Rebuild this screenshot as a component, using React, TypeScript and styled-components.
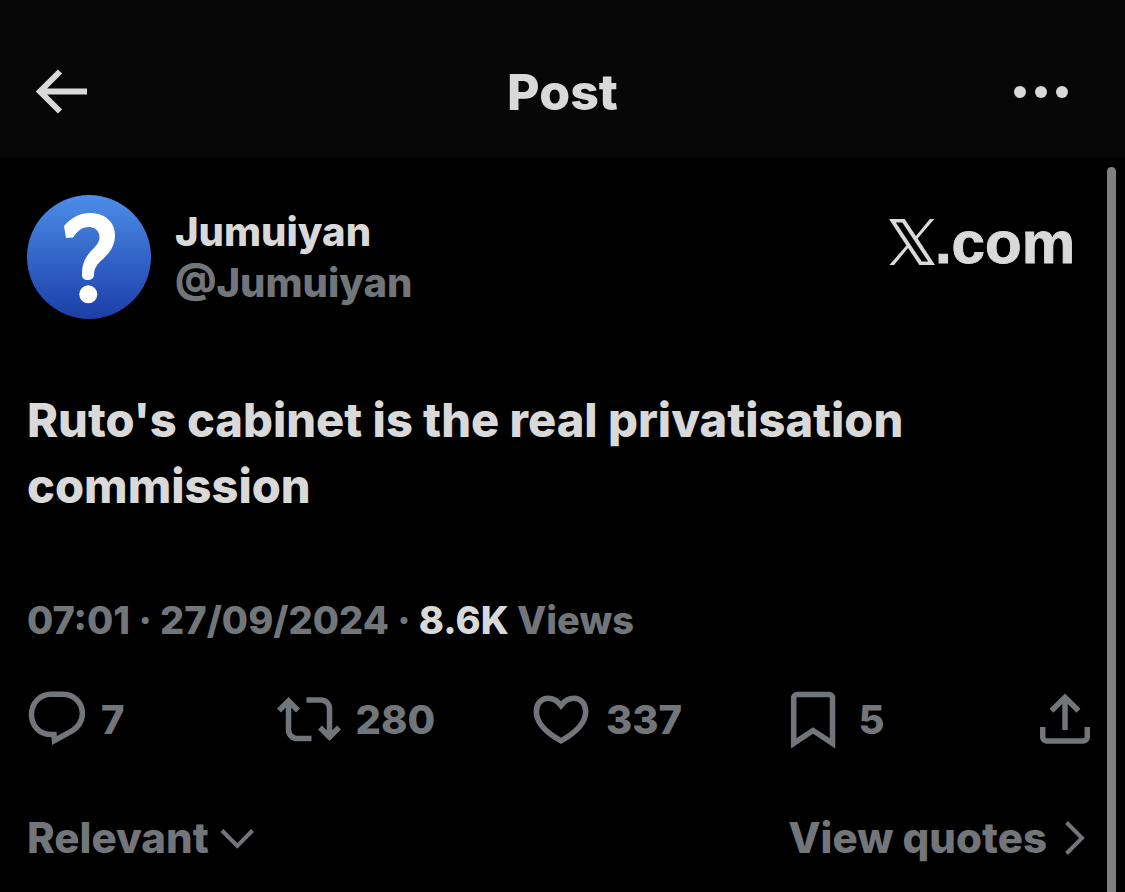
import React from "react";
import styled, { createGlobalStyle } from "styled-components";

const GlobalStyle = createGlobalStyle`
  *, *::before, *::after { box-sizing: border-box; }
  body {
    margin: 0;
    background: #000;
    color: #d9d9d9;
    font-family: Inter, "Liberation Sans", sans-serif;
    font-weight: 800;
  }
  h1, h2, p { margin: 0; font-weight: inherit; }
`;

const Page = styled.div`
  min-height: 100vh;
  display: flex;
  flex-direction: column;
`;

const Header = styled.header`
  display: grid;
  grid-template-columns: 1fr auto 1fr;
  align-items: center;
  height: 158px;
  padding: 26px 52px 0 32px;
  background: #070707;
`;

const Title = styled.h1`
  font-size: 50px;
  line-height: 64px;
  padding-left: 20px;
`;

const PlainButton = styled.button`
  display: inline-flex;
  align-items: center;
  padding: 0;
  border: 0;
  background: none;
  color: inherit;
  font: inherit;
  cursor: pointer;
`;

const MenuButton = styled(PlainButton)`
  justify-self: end;
`;

const Content = styled.main`
  position: relative;
  flex: 1;
  padding: 37px 35px 24px 27px;
`;

const ScrollThumb = styled.div`
  position: absolute;
  top: 9px;
  right: 9px;
  bottom: 0;
  width: 9px;
  border-radius: 5px 5px 0 0;
  background: #808080;
`;

const Author = styled.div`
  display: flex;
  align-items: center;
  gap: 24px;
  height: 124px;
`;

const Names = styled.div`
  flex: 1;
`;

const Name = styled.p<{ $muted?: boolean }>`
  font-size: 40px;
  line-height: 51px;
  color: ${(p) => (p.$muted ? "#72767a" : "inherit")};
`;

const Brand = styled.a`
  display: flex;
  align-items: flex-end;
  margin: 0 15px 28px 0;
  color: inherit;
  text-decoration: none;
  font-family: "Liberation Sans", Arial, sans-serif;
  font-weight: 700;
  font-size: 60px;
  line-height: 64px;
  -webkit-text-stroke: 1px currentColor;
`;

const PostText = styled.h2`
  margin-top: 68px;
  max-width: 940px;
  font-size: 47px;
  line-height: 66px;
`;

const Meta = styled.p`
  margin-top: 73px;
  color: #72767a;
  font-size: 38px;
  line-height: 56px;
`;

const Views = styled.strong`
  color: #d9d9d9;
  font-weight: inherit;
`;

const Actions = styled.div`
  display: grid;
  grid-template-columns: 248fr 256fr 256fr 251fr auto;
  align-items: center;
  height: 60px;
  margin-top: 42px;
  color: #72767a;
`;

const Action = styled(PlainButton)<{ $gap?: number }>`
  gap: ${(p) => p.$gap ?? 14}px;
  font-size: 40px;
  line-height: 56px;
`;

const Footer = styled.div`
  display: flex;
  justify-content: space-between;
  margin-top: 60px;
  padding-right: 3px;
  color: #72767a;
`;

const FooterLink = styled(PlainButton)<{ $gap: number }>`
  gap: ${(p) => p.$gap}px;
  font-size: 42px;
  line-height: 56px;
`;

const Stroke = styled.svg<{ $weight?: number }>`
  display: block;
  flex: none;
  fill: none;
  stroke: currentColor;
  stroke-width: ${(p) => p.$weight ?? 5.5};
`;

const Solid = styled.svg`
  display: block;
  flex: none;
  fill: currentColor;
`;

const BrandMark = styled(Solid)`
  margin-bottom: 10px;
`;

const BackIcon = () => (
  <Stroke $weight={6} width="60" height="50" viewBox="32 67 60 50" aria-hidden="true">
    <path d="M60 71.5 40 91.5l20 20M41 91.5h46" />
  </Stroke>
);

const DotsIcon = () => (
  <Solid width="64" height="50" viewBox="1009 67 64 50" aria-hidden="true">
    <circle cx="1020" cy="92" r="6" />
    <circle cx="1041" cy="92" r="6" />
    <circle cx="1062" cy="92" r="6" />
  </Solid>
);

const Avatar = () => (
  <Solid width="124" height="124" viewBox="0 0 124 124" role="img" aria-label="Jumuiyan">
    <defs>
      <linearGradient id="avatar" x1="0" y1="0" x2="0" y2="1">
        <stop offset="0" stopColor="#4d8de8" />
        <stop offset="0.5" stopColor="#3365c8" />
        <stop offset="1" stopColor="#1b3fa6" />
      </linearGradient>
    </defs>
    <circle cx="62" cy="62" r="62" fill="url(#avatar)" />
    <path
      fill="#fff"
      d="M37 31C45 22 53 18 63 18C78 18 88 27 88 40C88 50 84 56 77 63C70 69 67 73 67 80C67 83 64 85 61 85C57 85 55 83 55 80C55 70 57 64 64 56C70 50 72.500 47 72.500 42C72.500 36 68 32 62 32C54 32 50 37 46 42.500L39 43Z"
    />
    <circle cx="61.300" cy="99.300" r="9" fill="#fff" />
  </Solid>
);

const XMark = () => (
  <BrandMark width="46" height="46" viewBox="0 0 135 135" aria-hidden="true">
    <path
      fillRule="evenodd"
      d="M0 0H46L79 50 120 0H133L84 57 135 135H89L56 85 15 135H1L51 78ZM20 10 96 125H115L39 10Z"
    />
  </BrandMark>
);

const ReplyIcon = () => (
  <Stroke width="58" height="60" viewBox="27 690 58 60" aria-hidden="true">
    <path d="M54 734.500h-4C39 734.500 31.500 725 31.500 714.500 31.500 702.500 40.500 694.300 51 694.300h12C73.500 694.300 82.400 702.500 82.400 713.500 82.400 721 78 727 72 731L54.500 740.500Z" />
  </Stroke>
);

const RepostIcon = () => (
  <Stroke width="66" height="60" viewBox="275 690 66 60" aria-hidden="true">
    <path d="M279 710.500 288.500 701l9.500 9.500M288.500 701.500V730a8.500 8.500 0 0 0 8.500 8.500h14.500M306.500 700H321a8.500 8.500 0 0 1 8.500 8.500V737M320 727.500l9.500 9.500 9.500-9.500" />
  </Stroke>
);

const LikeIcon = () => (
  <Stroke width="58" height="60" viewBox="532 690 58 60" aria-hidden="true">
    <path d="M561 705.500C556.500 699.500 552 698.300 548 698.300 541 698.300 536.300 704 536.300 711.500 536.300 722 545 732 561 740.800 577 732 585.700 722 585.700 711.500 585.700 704 581 698.300 574 698.300 570 698.300 565.500 699.500 561 705.500Z" />
  </Stroke>
);

const BookmarkIcon = () => (
  <Stroke width="48" height="60" viewBox="789 690 48 60" aria-hidden="true">
    <path d="M793.700 743.300V698a3.500 3.500 0 0 1 3.500-3.500H829a3.500 3.500 0 0 1 3.500 3.500V743.300L813 730.500Z" />
  </Stroke>
);

const ShareIcon = () => (
  <Stroke width="50" height="60" viewBox="1040 690 50 60" aria-hidden="true">
    <path d="M1065 730V698M1051.500 710.800 1065 697.300l13.500 13.500M1042.700 727v10a4 4 0 0 0 4 4h36.600a4 4 0 0 0 4-4V727" />
  </Stroke>
);

const ChevronDown = () => (
  <Stroke $weight={4} width="36" height="24" viewBox="219 825 36 24" aria-hidden="true">
    <path d="M222 829.500 237.300 845 252.500 829.500" />
  </Stroke>
);

const ChevronRight = () => (
  <Stroke $weight={4} width="24" height="36" viewBox="1063 819 24 36" aria-hidden="true">
    <path d="M1066.500 821.500 1082 837 1066.500 852.500" />
  </Stroke>
);

export default function App() {
  return (
    <>
      <GlobalStyle />
      <Page>
        <Header>
          <PlainButton aria-label="Back"><BackIcon /></PlainButton>
          <Title>Post</Title>
          <MenuButton aria-label="More"><DotsIcon /></MenuButton>
        </Header>
        <Content>
          <Author>
            <Avatar />
            <Names>
              <Name>Jumuiyan</Name>
              <Name $muted>@Jumuiyan</Name>
            </Names>
            <Brand href="#" aria-label="X.com"><XMark />.com</Brand>
          </Author>
          <PostText>Ruto's cabinet is the real privatisation commission</PostText>
          <Meta>07:01 · 27/09/2024 · <Views>8.6K</Views> Views</Meta>
          <Actions>
            <Action aria-label="7 replies" $gap={16}><ReplyIcon />7</Action>
            <Action aria-label="280 reposts"><RepostIcon />280</Action>
            <Action aria-label="337 likes" $gap={16}><LikeIcon />337</Action>
            <Action aria-label="5 bookmarks" $gap={22}><BookmarkIcon />5</Action>
            <Action aria-label="Share"><ShareIcon /></Action>
          </Actions>
          <Footer>
            <FooterLink $gap={10}>Relevant<ChevronDown /></FooterLink>
            <FooterLink $gap={16}>View quotes<ChevronRight /></FooterLink>
          </Footer>
          <ScrollThumb />
        </Content>
      </Page>
    </>
  );
}
